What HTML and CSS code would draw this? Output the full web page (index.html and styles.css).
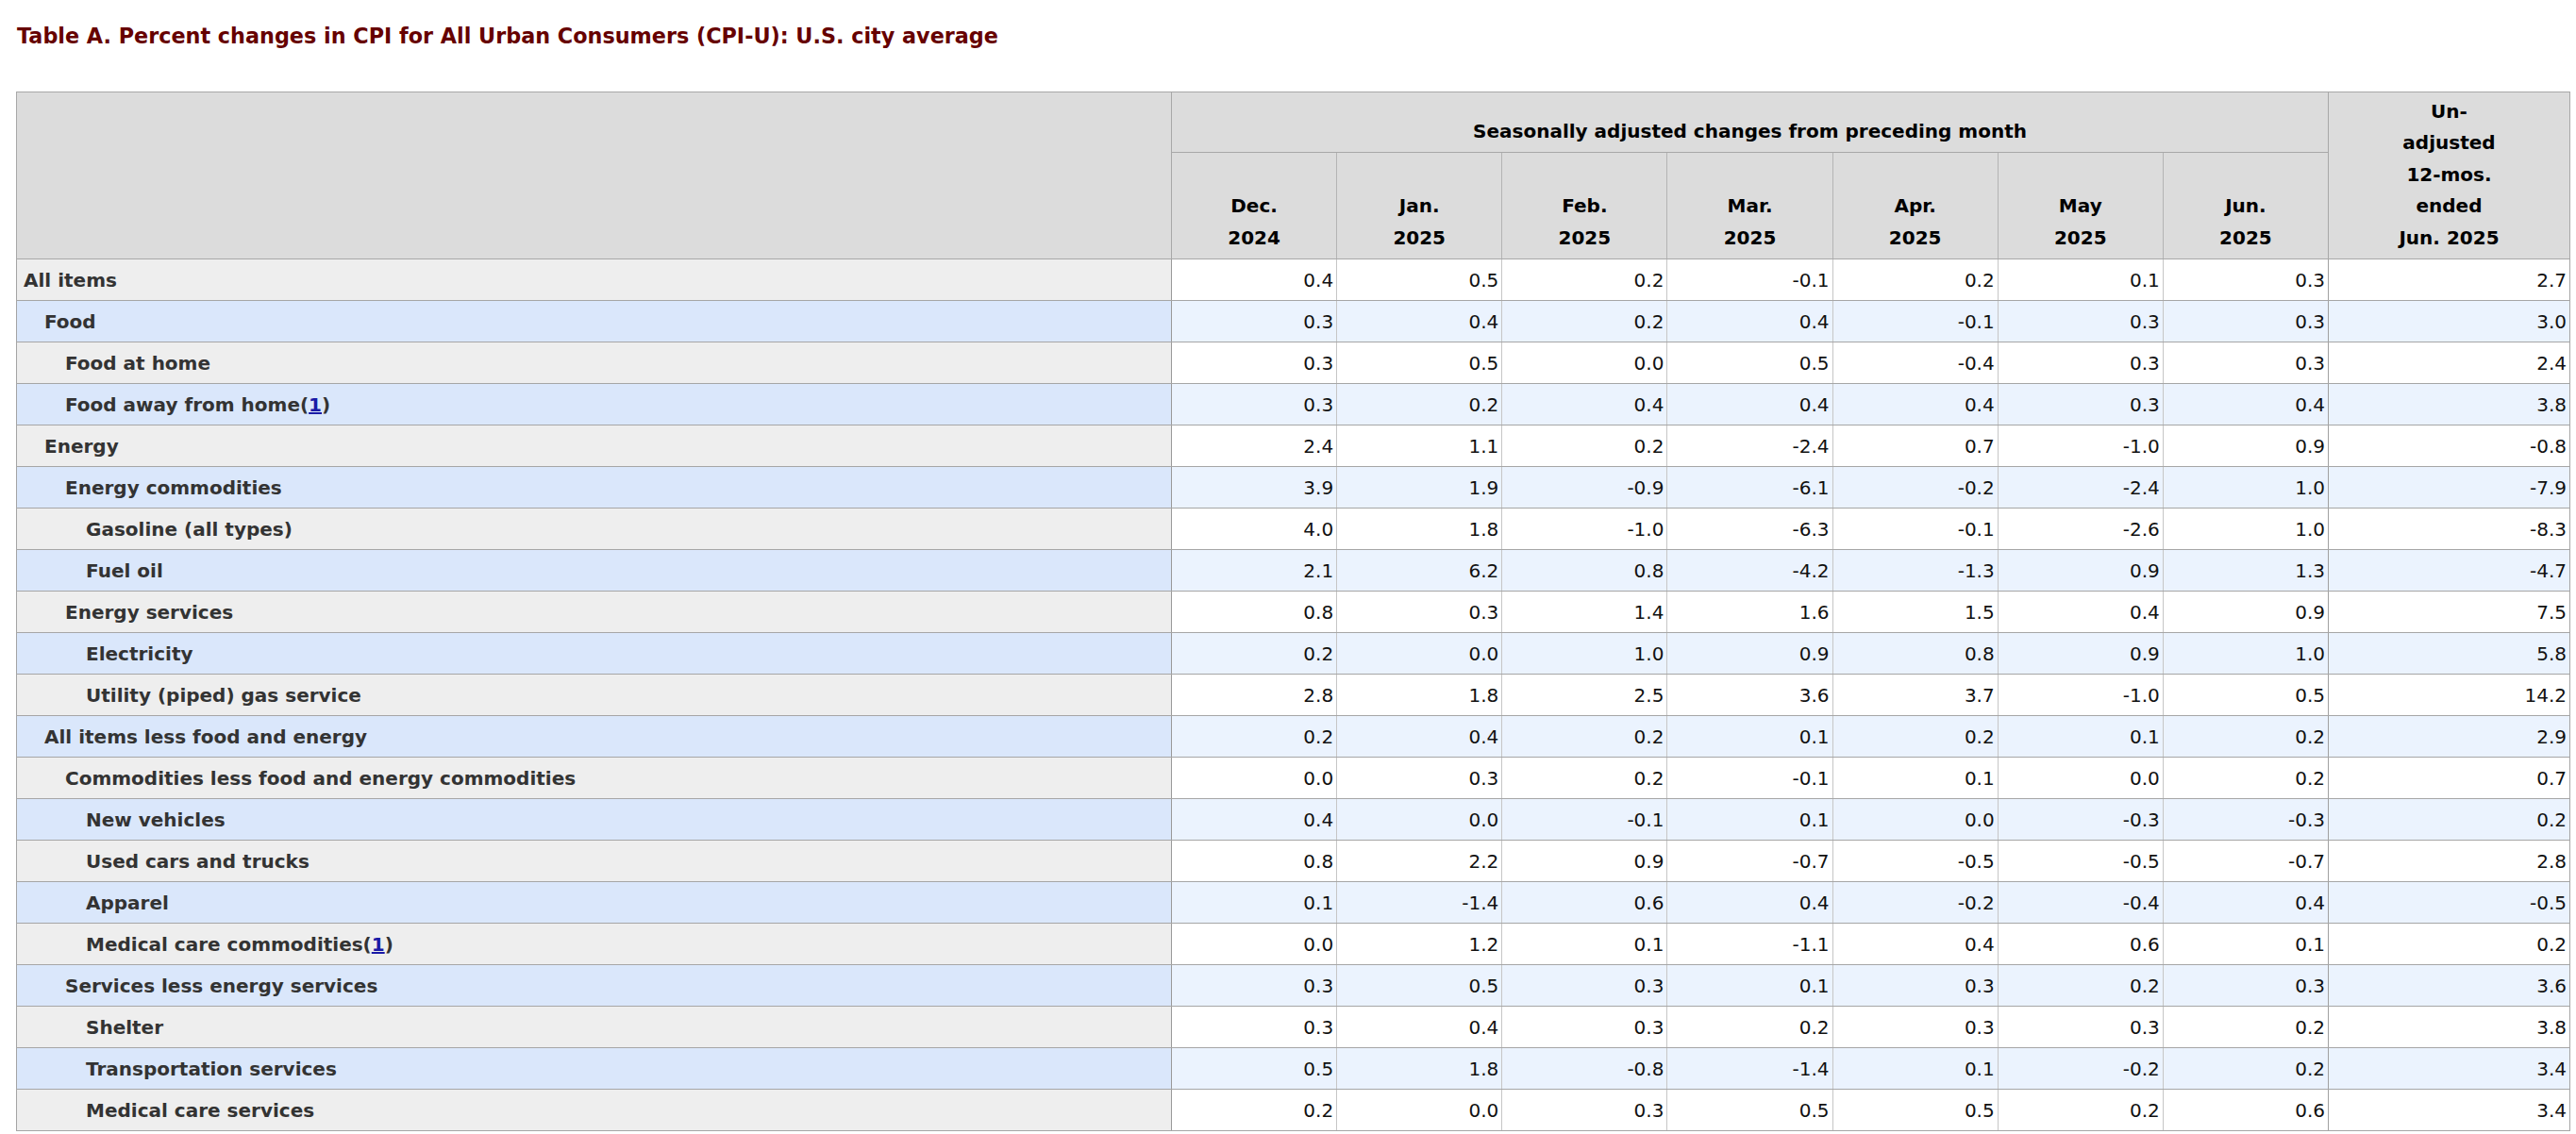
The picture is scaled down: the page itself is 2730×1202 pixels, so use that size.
FILE: index.html
```html
<!DOCTYPE html>
<html lang="en">
<head>
<meta charset="utf-8">
<title>Table A. Percent changes in CPI for All Urban Consumers (CPI-U): U.S. city average</title>
<link rel="stylesheet" href="styles.css">
</head>
<body>
<div class="page">
  <h1 class="caption">Table A. Percent changes in CPI for All Urban Consumers (CPI-U): U.S. city average</h1>
  <table class="cpi">
    <colgroup>
      <col class="c-stub">
      <col class="c-m"><col class="c-m"><col class="c-m"><col class="c-m"><col class="c-m"><col class="c-m"><col class="c-m">
      <col class="c-un">
    </colgroup>
    <thead>
      <tr class="h1row">
        <th class="stub-h" rowspan="2"></th>
        <th class="group" colspan="7">Seasonally adjusted changes from preceding month</th>
        <th class="unadj" rowspan="2">Un-<br>adjusted<br>12-mos.<br>ended<br>Jun. 2025</th>
      </tr>
      <tr class="h2row">
        <th>Dec.<br>2024</th>
        <th>Jan.<br>2025</th>
        <th>Feb.<br>2025</th>
        <th>Mar.<br>2025</th>
        <th>Apr.<br>2025</th>
        <th>May<br>2025</th>
        <th class="jun">Jun.<br>2025</th>
      </tr>
    </thead>
    <tbody>
      <tr><th class="lvl0">All items</th><td>0.4</td><td>0.5</td><td>0.2</td><td>-0.1</td><td>0.2</td><td>0.1</td><td>0.3</td><td>2.7</td></tr>
      <tr><th class="lvl1">Food</th><td>0.3</td><td>0.4</td><td>0.2</td><td>0.4</td><td>-0.1</td><td>0.3</td><td>0.3</td><td>3.0</td></tr>
      <tr><th class="lvl2">Food at home</th><td>0.3</td><td>0.5</td><td>0.0</td><td>0.5</td><td>-0.4</td><td>0.3</td><td>0.3</td><td>2.4</td></tr>
      <tr><th class="lvl2">Food away from home(<a href="#fn1">1</a>)</th><td>0.3</td><td>0.2</td><td>0.4</td><td>0.4</td><td>0.4</td><td>0.3</td><td>0.4</td><td>3.8</td></tr>
      <tr><th class="lvl1">Energy</th><td>2.4</td><td>1.1</td><td>0.2</td><td>-2.4</td><td>0.7</td><td>-1.0</td><td>0.9</td><td>-0.8</td></tr>
      <tr><th class="lvl2">Energy commodities</th><td>3.9</td><td>1.9</td><td>-0.9</td><td>-6.1</td><td>-0.2</td><td>-2.4</td><td>1.0</td><td>-7.9</td></tr>
      <tr><th class="lvl3">Gasoline (all types)</th><td>4.0</td><td>1.8</td><td>-1.0</td><td>-6.3</td><td>-0.1</td><td>-2.6</td><td>1.0</td><td>-8.3</td></tr>
      <tr><th class="lvl3">Fuel oil</th><td>2.1</td><td>6.2</td><td>0.8</td><td>-4.2</td><td>-1.3</td><td>0.9</td><td>1.3</td><td>-4.7</td></tr>
      <tr><th class="lvl2">Energy services</th><td>0.8</td><td>0.3</td><td>1.4</td><td>1.6</td><td>1.5</td><td>0.4</td><td>0.9</td><td>7.5</td></tr>
      <tr><th class="lvl3">Electricity</th><td>0.2</td><td>0.0</td><td>1.0</td><td>0.9</td><td>0.8</td><td>0.9</td><td>1.0</td><td>5.8</td></tr>
      <tr><th class="lvl3">Utility (piped) gas service</th><td>2.8</td><td>1.8</td><td>2.5</td><td>3.6</td><td>3.7</td><td>-1.0</td><td>0.5</td><td>14.2</td></tr>
      <tr><th class="lvl1">All items less food and energy</th><td>0.2</td><td>0.4</td><td>0.2</td><td>0.1</td><td>0.2</td><td>0.1</td><td>0.2</td><td>2.9</td></tr>
      <tr><th class="lvl2">Commodities less food and energy commodities</th><td>0.0</td><td>0.3</td><td>0.2</td><td>-0.1</td><td>0.1</td><td>0.0</td><td>0.2</td><td>0.7</td></tr>
      <tr><th class="lvl3">New vehicles</th><td>0.4</td><td>0.0</td><td>-0.1</td><td>0.1</td><td>0.0</td><td>-0.3</td><td>-0.3</td><td>0.2</td></tr>
      <tr><th class="lvl3">Used cars and trucks</th><td>0.8</td><td>2.2</td><td>0.9</td><td>-0.7</td><td>-0.5</td><td>-0.5</td><td>-0.7</td><td>2.8</td></tr>
      <tr><th class="lvl3">Apparel</th><td>0.1</td><td>-1.4</td><td>0.6</td><td>0.4</td><td>-0.2</td><td>-0.4</td><td>0.4</td><td>-0.5</td></tr>
      <tr><th class="lvl3">Medical care commodities(<a href="#fn1">1</a>)</th><td>0.0</td><td>1.2</td><td>0.1</td><td>-1.1</td><td>0.4</td><td>0.6</td><td>0.1</td><td>0.2</td></tr>
      <tr><th class="lvl2">Services less energy services</th><td>0.3</td><td>0.5</td><td>0.3</td><td>0.1</td><td>0.3</td><td>0.2</td><td>0.3</td><td>3.6</td></tr>
      <tr><th class="lvl3">Shelter</th><td>0.3</td><td>0.4</td><td>0.3</td><td>0.2</td><td>0.3</td><td>0.3</td><td>0.2</td><td>3.8</td></tr>
      <tr><th class="lvl3">Transportation services</th><td>0.5</td><td>1.8</td><td>-0.8</td><td>-1.4</td><td>0.1</td><td>-0.2</td><td>0.2</td><td>3.4</td></tr>
      <tr><th class="lvl3">Medical care services</th><td>0.2</td><td>0.0</td><td>0.3</td><td>0.5</td><td>0.5</td><td>0.2</td><td>0.6</td><td>3.4</td></tr>
    </tbody>
  </table>
</div>
</body>
</html>
```

FILE: styles.css
```css
html, body {
  margin: 0;
  padding: 0;
  background: #ffffff;
}

body {
  font-family: Verdana, "DejaVu Sans", sans-serif;
  color: #000000;
}

.page {
  padding: 25px 6px 0 17px;
}

.caption {
  margin: 0 0 46px 1px;
  font-size: 22.3px;
  line-height: 26px;
  font-weight: bold;
  color: #660000;
}

.cpi {
  width: 2707px;
  border-collapse: collapse;
  table-layout: fixed;
  border: 1px solid #a4a4a4;
}

.c-stub { width: 1224px; }
.c-un { width: 256px; }

.cpi thead th {
  background: #dcdcdc;
  font-size: 20px;
  font-weight: bold;
  line-height: 33.5px;
  text-align: center;
  vertical-align: bottom;
  padding: 0 2px 5px;
  border: 1px solid #a8a8a8;
  color: #000000;
}

.cpi thead .h2row th {
  border-left-color: #b4b4b4;
  border-right-color: #b4b4b4;
}

.cpi thead .h2row th.jun {
  border-right-color: #a0a0a0;
}

.h1row { height: 64px; }
.h2row { height: 113px; }

.cpi tbody tr {
  height: 44px;
}

.cpi tbody th {
  text-align: left;
  font-size: 20px;
  font-weight: bold;
  color: #333333;
  background: #eeeeee;
  padding: 0 4px 0 7px;
  white-space: nowrap;
  border-top: 1px solid #a6a6a6;
  border-bottom: 1px solid #a6a6a6;
  border-right: 1px solid #999999;
}

.cpi tbody td {
  text-align: right;
  font-size: 20px;
  color: #111111;
  background: #ffffff;
  padding: 0 3px 0 4px;
  border-top: 1px solid #a6a6a6;
  border-bottom: 1px solid #a6a6a6;
  border-left: 1px solid #c6c6c6;
  border-right: 1px solid #c6c6c6;
}

.cpi tbody td:nth-last-child(2) {
  border-right-color: #a0a0a0;
}

.cpi tbody td:last-child {
  border-right-color: #a4a4a4;
}

.cpi tbody tr:nth-child(even) th {
  background: #dae7fb;
}

.cpi tbody tr:nth-child(even) td {
  background: #ebf3fe;
}

.cpi tbody th.lvl1 { padding-left: 29px; }
.cpi tbody th.lvl2 { padding-left: 51px; }
.cpi tbody th.lvl3 { padding-left: 73px; }

.cpi a {
  color: #1a1aa6;
  text-decoration: underline;
}
```
